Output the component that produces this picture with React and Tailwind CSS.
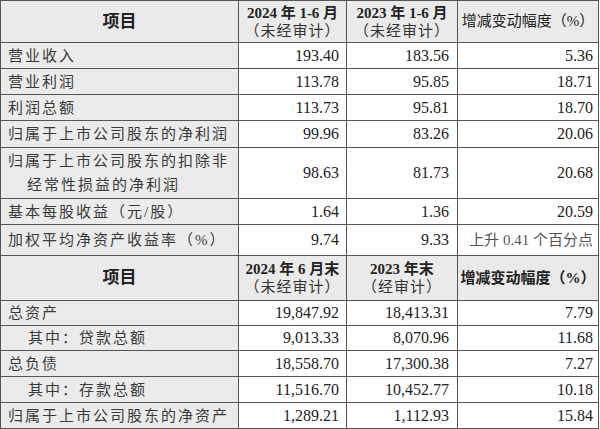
import React from "react";

const font = { fontFamily: '"Liberation Serif", "Noto Sans CJK SC", serif' };

const topRows = [
  { label: "营业收入", a: "193.40", b: "183.56", c: "5.36", h: "h-[25px]" },
  { label: "营业利润", a: "113.78", b: "95.85", c: "18.71", h: "h-[25px]" },
  { label: "利润总额", a: "113.73", b: "95.81", c: "18.70", h: "h-[25px]" },
  { label: "归属于上市公司股东的净利润", a: "99.96", b: "83.26", c: "20.06", h: "h-[26px]" },
  {
    label: "归属于上市公司股东的扣除非",
    label2: "经常性损益的净利润",
    a: "98.63",
    b: "81.73",
    c: "20.68",
    h: "h-[50px]",
  },
  { label: "基本每股收益（元/股）", a: "1.64", b: "1.36", c: "20.59", h: "h-[25px]" },
  {
    label: "加权平均净资产收益率（%）",
    a: "9.74",
    b: "9.33",
    c: "上升 0.41 个百分点",
    muted: true,
    h: "h-[30px]",
  },
];

const bottomRows = [
  { label: "总资产", a: "19,847.92", b: "18,413.31", c: "7.79", h: "h-[24px]" },
  { label: "其中：贷款总额", indent: true, a: "9,013.33", b: "8,070.96", c: "11.68", h: "h-[24px]" },
  { label: "总负债", a: "18,558.70", b: "17,300.38", c: "7.27", h: "h-[25px]" },
  { label: "其中：存款总额", indent: true, a: "11,516.70", b: "10,452.77", c: "10.18", h: "h-[25px]" },
  { label: "归属于上市公司股东的净资产", a: "1,289.21", b: "1,112.93", c: "15.84", h: "h-[25px]" },
];

function HeaderRow({ h, col1, col1Sub, col2, col2Sub, boldLast }) {
  return (
    <>
      <div className={`${h} bg-[#eaeaea] flex items-center justify-center text-[17px] font-bold text-[#222]`}>
        项目
      </div>
      <div className={`${h} bg-[#eaeaea] flex flex-col items-center justify-center leading-[18px] text-[#222]`}>
        <span className="text-[15px] font-bold whitespace-nowrap">{col1}</span>
        <span className="text-[15px] tracking-[1px] text-[#333] whitespace-nowrap">{col1Sub}</span>
      </div>
      <div className={`${h} bg-[#eaeaea] flex flex-col items-center justify-center leading-[18px] text-[#222]`}>
        <span className="text-[15px] font-bold whitespace-nowrap">{col2}</span>
        <span className="text-[15px] tracking-[1px] text-[#333] whitespace-nowrap">{col2Sub}</span>
      </div>
      <div
        className={`${h} bg-[#eaeaea] flex items-center justify-center text-[15px] whitespace-nowrap text-[#222] ${
          boldLast ? "font-bold" : ""
        }`}
      >
        增减变动幅度（%）
      </div>
    </>
  );
}

function DataRow({ row }) {
  return (
    <>
      <div
        className={`${row.h} bg-[#ebebeb] flex flex-col justify-center text-[15px] tracking-[2px] leading-[24px] text-[#3a3a3a] ${
          row.indent ? "pl-[27px]" : "pl-[7px]"
        }`}
      >
        <span className="whitespace-nowrap">{row.label}</span>
        {row.label2 && <span className="pl-[19px] whitespace-nowrap">{row.label2}</span>}
      </div>
      <div className={`${row.h} bg-white flex items-center justify-end pr-[7px] text-[16px] text-[#222]`}>
        {row.a}
      </div>
      <div className={`${row.h} bg-white flex items-center justify-end pr-[8px] text-[16px] text-[#222]`}>
        {row.b}
      </div>
      <div
        className={`${row.h} bg-white flex items-center justify-end pr-[5px] whitespace-nowrap ${
          row.muted ? "text-[15px] text-[#555]" : "text-[16px] text-[#222]"
        }`}
      >
        {row.c}
      </div>
    </>
  );
}

export default function App() {
  return (
    <div className="w-[600px] h-[429px] bg-white overflow-hidden" style={font}>
      <div className="w-[599px] grid grid-cols-[237px_107px_110px_140px] gap-px p-px bg-[#555]">
        <HeaderRow
          h="h-[41px]"
          col1="2024 年 1-6 月"
          col1Sub="（未经审计）"
          col2="2023 年 1-6 月"
          col2Sub="（未经审计）"
        />
        {topRows.map((row) => (
          <DataRow key={row.label} row={row} />
        ))}
        <HeaderRow
          h="h-[44px]"
          col1="2024 年 6 月末"
          col1Sub="（未经审计）"
          col2="2023 年末"
          col2Sub="（经审计）"
          boldLast
        />
        {bottomRows.map((row) => (
          <DataRow key={row.label} row={row} />
        ))}
      </div>
    </div>
  );
}
